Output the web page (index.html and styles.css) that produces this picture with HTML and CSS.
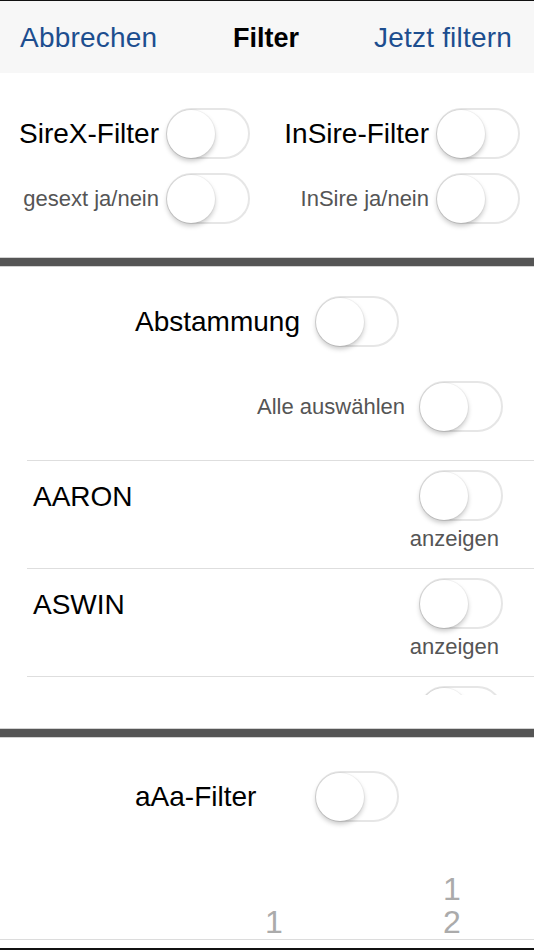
FILE: index.html
```html
<!DOCTYPE html>
<html lang="de">
<head>
<meta charset="utf-8">
<title>Filter</title>
<link rel="stylesheet" href="styles.css">
</head>
<body>
<div class="page">
  <header class="nav">
    <span class="nav-btn nav-left">Abbrechen</span>
    <span class="nav-title">Filter</span>
    <span class="nav-btn nav-right">Jetzt filtern</span>
  </header>

  <section class="sec1">
    <div class="cell cell-l"><span class="lbl">SireX-Filter</span><span class="tgl"><span class="knob"></span></span></div>
    <div class="cell cell-r"><span class="lbl">InSire-Filter</span><span class="tgl"><span class="knob"></span></span></div>
    <div class="cell cell-l"><span class="lbl sub">gesext ja/nein</span><span class="tgl"><span class="knob"></span></span></div>
    <div class="cell cell-r"><span class="lbl sub">InSire ja/nein</span><span class="tgl"><span class="knob"></span></span></div>
  </section>

  <div class="divider"></div>

  <section class="sec2">
    <div class="center-row"><span class="lbl wide">Abstammung</span><span class="tgl"><span class="knob"></span></span></div>
    <div class="all-row"><span class="lbl sub">Alle auswählen</span><span class="tgl"><span class="knob"></span></span></div>
    <div class="list">
      <div class="item">
        <div class="name">AARON</div>
        <div class="right"><span class="tgl"><span class="knob"></span></span><span class="show">anzeigen</span></div>
      </div>
      <div class="item">
        <div class="name">ASWIN</div>
        <div class="right"><span class="tgl"><span class="knob"></span></span><span class="show">anzeigen</span></div>
      </div>
      <div class="item">
        <div class="name"></div>
        <div class="right"><span class="tgl"><span class="knob"></span></span></div>
      </div>
    </div>
  </section>

  <div class="divider"></div>

  <section class="sec3">
    <div class="center-row"><span class="lbl wide">aAa-Filter</span><span class="tgl"><span class="knob"></span></span></div>
    <div class="nums">
      <div class="num"></div>
      <div class="num"><span class="n">1</span></div>
      <div class="num"><span class="n">12</span></div>
    </div>
    <div class="bottom-gap"></div>
  </section>
</div>
</body>
</html>
```

FILE: styles.css
```css
* { box-sizing: border-box; }
html, body { margin: 0; padding: 0; background: #fff; }
body {
  font-family: "Liberation Sans", Arial, sans-serif;
  color: #000;
  width: 534px;
  height: 950px;
  overflow: hidden;
}
.page { width: 534px; }

.nav {
  border-top: 1px solid #111;
  height: 73px;
  background: #f7f7f7;
  display: grid;
  grid-template-columns: 1fr auto 1fr;
  align-items: center;
  padding: 2px 22px 0 20px;
}
.nav-btn { font-size: 28px; color: #1d4e8f; letter-spacing: 0.2px; }
.nav-left { justify-self: start; }
.nav-right { justify-self: end; }
.nav-title { font-size: 27px; font-weight: bold; }

.sec1 {
  display: grid;
  grid-template-columns: 267px 267px;
  row-gap: 14px;
  padding: 35px 0 33px;
}
.cell { display: flex; align-items: center; justify-content: flex-end; gap: 7px; }
.cell-l { padding-right: 17px; }
.cell-r { padding-right: 14px; }

.lbl { font-size: 28px; line-height: 32px; white-space: nowrap; }
.lbl.sub { font-size: 22px; color: #555; }
.lbl.wide { width: 173px; }

.tgl {
  flex: none;
  width: 84px;
  height: 51px;
  border: 2px solid #e6e6e6;
  border-radius: 26px;
  background: #fff;
  display: flex;
  align-items: center;
}
.knob {
  width: 48px;
  height: 48px;
  margin-left: -1px;
  border-radius: 50%;
  background: #fff;
  box-shadow: 0 3px 5px rgba(0,0,0,0.22), 0 0 0 1px rgba(0,0,0,0.04);
}

.divider {
  height: 10px;
  background: #555;
  border-top: 1px solid #d2d2d2;
  border-bottom: 1px solid #d2d2d2;
}

.sec2 { padding-top: 29px; padding-bottom: 33px; }
.center-row { display: flex; justify-content: center; align-items: center; gap: 7px; }
.all-row {
  display: flex;
  justify-content: flex-end;
  align-items: center;
  gap: 14px;
  padding-right: 31px;
  margin-top: 34px;
}
.list {
  margin: 28px 0 0 27px;
  height: 235px;
  overflow: hidden;
}
.item {
  border-top: 1px solid #dedede;
  display: flex;
  justify-content: space-between;
  padding: 9px 31px 16px 6px;
}
.name {
  font-size: 28px;
  height: 51px;
  display: flex;
  align-items: center;
  padding-top: 2px;
}
.right { display: flex; flex-direction: column; align-items: flex-end; }
.show {
  font-size: 22px;
  line-height: 26px;
  color: #555;
  margin-top: 5px;
  margin-right: 4px;
}

.sec3 { padding-top: 33px; }
.nums {
  display: grid;
  grid-template-columns: 178px 178px 178px;
  align-items: end;
  margin-top: 51px;
  border-bottom: 1px solid #dcdcdc;
  padding-left: 7px;
}
.num { display: flex; justify-content: center; }
.n {
  width: 20px;
  font-size: 32px;
  line-height: 33px;
  color: #ababab;
  word-break: break-all;
  text-align: center;
  display: block;
}
.bottom-gap { height: 10px; border-bottom: 2px solid #111; }
```
